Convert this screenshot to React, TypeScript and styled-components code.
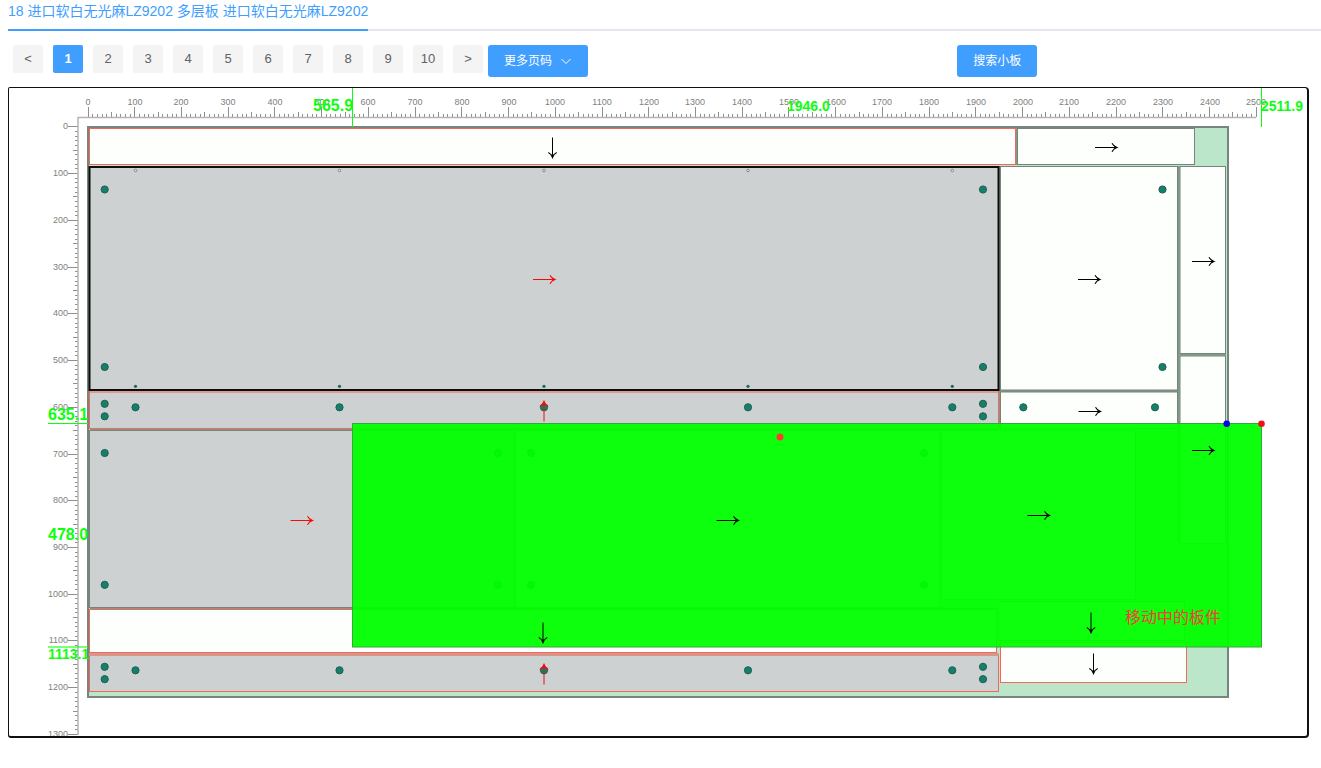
import React from "react";
import styled, { createGlobalStyle, css } from "styled-components";

const GlobalStyle = createGlobalStyle`
  *, *::before, *::after { box-sizing: border-box; }
  body {
    margin: 0;
    background: #fff;
    font-family: "Liberation Sans", "Noto Sans CJK SC", sans-serif;
  }
  button { font-family: inherit; cursor: pointer; }
`;

const Page = styled.main`
  padding-left: 8px;
`;

const Tabs = styled.div`
  display: flex;
  height: 31px;
  box-shadow: inset 0 -2px 0 #e4e7ed;
`;

const Tab = styled.button`
  height: 31px;
  padding: 0 0 7px;
  border: 0;
  border-bottom: 2px solid #409eff;
  background: none;
  color: #409eff;
  font-size: 14px;
  line-height: 22px;
  white-space: nowrap;
`;

const Toolbar = styled.div`
  display: flex;
  align-items: flex-start;
  gap: 4px;
  padding: 14px 0 10px;
`;

const PagerArea = styled.div`
  display: flex;
  flex: 0 0 72%;
  gap: 5px;
  padding-left: 5px;
`;

const Pager = styled.nav`
  display: flex;
  gap: 10px;
`;

const PageButton = styled.button<{ $active?: boolean }>`
  width: 30px;
  height: 28px;
  padding: 0;
  border: 0;
  border-radius: 2px;
  background: #f4f4f5;
  color: #606266;
  font-size: 13px;
  line-height: 28px;
  ${(p) =>
    p.$active &&
    css`
      background: #409eff;
      color: #fff;
      font-weight: 700;
    `}
`;

const PrimaryButton = styled.button`
  display: inline-flex;
  align-items: center;
  gap: 6px;
  height: 32px;
  padding: 0 16px;
  border: 0;
  border-radius: 3px;
  background: #409eff;
  color: #fff;
  font-size: 12px;
  line-height: 12px;
  white-space: nowrap;
`;

const Frame = styled.section`
  margin: 0 12px 30px 0;
  border: solid #111;
  border-width: 1px 2px 2px 1px;
  border-radius: 2px 4px 4px 3px;
`;

const Drawing = styled.svg`
  display: block;
  width: 100%;
  height: auto;
`;

const RulerText = styled.text`
  font-size: 9px;
  fill: #808080;
`;

const Measure = styled.text<{ $long?: boolean }>`
  font-size: ${(p) => (p.$long ? 14 : 16)}px;
  font-weight: 700;
  fill: #0dff0d;
`;

const MovingLabel = styled.text`
  font-size: 16px;
  fill: #f83c38;
`;

const ORIGIN_X = 88;
const ORIGIN_Y = 126.9;
const STEP = 4.673;

const GREY = "#cdd1d1";
const WHITE = "#fcfffc";
const EDGE = "#78837c";
const RED = "#f2665c";

type Panel = { x: number; y: number; r: number; b: number; fill: string; edge: string };

const panels: Panel[] = [
  { x: 89.5, y: 128.5, r: 1015.5, b: 164.5, fill: WHITE, edge: RED },
  { x: 1017.5, y: 128.5, r: 1194.5, b: 164.5, fill: WHITE, edge: EDGE },
  { x: 1000.5, y: 166.5, r: 1177.5, b: 390, fill: WHITE, edge: EDGE },
  { x: 1180, y: 166.5, r: 1225.5, b: 353.5, fill: WHITE, edge: EDGE },
  { x: 1180, y: 356, r: 1225.5, b: 543.5, fill: WHITE, edge: EDGE },
  { x: 89.5, y: 391.5, r: 998.5, b: 428.5, fill: GREY, edge: RED },
  { x: 1000.5, y: 392, r: 1177.5, b: 428.5, fill: WHITE, edge: EDGE },
  { x: 89.5, y: 430.5, r: 513.5, b: 607.5, fill: GREY, edge: EDGE },
  { x: 515.5, y: 430.5, r: 939.5, b: 607.5, fill: WHITE, edge: EDGE },
  { x: 941.5, y: 430.5, r: 1135.5, b: 599.5, fill: WHITE, edge: EDGE },
  { x: 89.5, y: 609.5, r: 996.5, b: 652.5, fill: WHITE, edge: RED },
  { x: 998.5, y: 601.5, r: 1184.5, b: 640.5, fill: WHITE, edge: RED },
  { x: 1000.5, y: 642.5, r: 1186.5, b: 682.5, fill: WHITE, edge: RED },
  { x: 89.5, y: 654.5, r: 998.5, b: 691.5, fill: GREY, edge: RED },
];

const columns = [135.5, 339.5, 544, 748, 952.3];

const holes: [number, number][] = [
  ...[189.5, 367].flatMap((y) => [104.7, 983, 1162.5].map((x) => [x, y] as [number, number])),
  ...[403.8, 416.3, 666.8, 679.2].flatMap((y) => [104.7, 983].map((x) => [x, y] as [number, number])),
  ...[407.3, 670.3].flatMap((y) => columns.map((x) => [x, y] as [number, number])),
  [1023.3, 407.3],
  [1155, 407.3],
  ...[453, 584.8].flatMap((y) => [104.7, 498, 531, 924].map((x) => [x, y] as [number, number])),
];

type ArrowSpec = { x: number; y: number; turn: number; color: string };

const INK = "#000";
const HOT = "#f80808";

const arrows: ArrowSpec[] = [
  { x: 1106, y: 147.5, turn: 0, color: INK },
  { x: 544, y: 279.5, turn: 0, color: HOT },
  { x: 1089, y: 279.5, turn: 0, color: INK },
  { x: 1203, y: 261.5, turn: 0, color: INK },
  { x: 1089.5, y: 411.5, turn: 0, color: INK },
  { x: 1203, y: 450.5, turn: 0, color: INK },
  { x: 301.5, y: 520.5, turn: 0, color: HOT },
  { x: 727.5, y: 520.5, turn: 0, color: INK },
  { x: 1038.5, y: 515.5, turn: 0, color: INK },
  { x: 552.5, y: 147.5, turn: 90, color: INK },
  { x: 543, y: 632.5, turn: 90, color: INK },
  { x: 1091, y: 622.5, turn: 90, color: INK },
  { x: 1093.5, y: 663.5, turn: 90, color: INK },
  { x: 544, y: 411.5, turn: -90, color: HOT },
  { x: 544, y: 674.5, turn: -90, color: HOT },
];

const pages = ["1", "2", "3", "4", "5", "6", "7", "8", "9", "10"];

function Arrow({ x, y, turn, color }: ArrowSpec) {
  const half = turn === 0 ? 11 : 10;
  return (
    <g transform={`translate(${x} ${y}) rotate(${turn})`} fill="none" stroke={color}>
      <path d={`M${-half} 0H${half}`} />
      <path d={`M${half - 5} -4.2Q${half - 3.5} -1.2 ${half} 0Q${half - 3.5} 1.2 ${half - 5} 4.2`} strokeWidth="1.1" />
      <path d={`M${half - 3} -1.5L${half} 0L${half - 3} 1.5Z`} fill={color} stroke="none" />
    </g>
  );
}

function tickLength(i: number) {
  if (i % 10 === 0) return 10;
  return i % 5 === 0 ? 5 : 3;
}

function Rulers() {
  const across = Array.from({ length: 251 }, (_, i) => i);
  const down = Array.from({ length: 131 }, (_, i) => i);
  return (
    <g>
      <g stroke="#8f8f8f" shapeRendering="crispEdges">
        {across.map((i) => {
          const x = Math.floor(ORIGIN_X + i * STEP) + 0.5;
          return <line key={i} x1={x} x2={x} y1={117 - tickLength(i)} y2={117} />;
        })}
        {down.map((i) => {
          const y = Math.floor(ORIGIN_Y + i * STEP) + 0.5;
          return <line key={i} x1={78 - tickLength(i)} x2={78} y1={y} y2={y} />;
        })}
      </g>
      <path d="M78 735V117.5H1256" fill="none" stroke="#b4b4b4" strokeWidth="1.5" />
      {across
        .filter((i) => i % 10 === 0)
        .map((i) => (
          <RulerText key={i} x={Math.round(ORIGIN_X + i * STEP)} y={105} textAnchor="middle">
            {i * 10}
          </RulerText>
        ))}
      {down
        .filter((i) => i % 10 === 0)
        .map((i) => (
          <RulerText key={i} x={68} y={Math.floor(ORIGIN_Y + i * STEP) + 3} textAnchor="end">
            {i * 10}
          </RulerText>
        ))}
    </g>
  );
}

function CuttingPlan() {
  return (
    <Drawing viewBox="9 88 1298 648" role="img" aria-label="排版图">
      <Rulers />
      <rect x="88" y="127" width="1140" height="570" fill="#bce6c9" stroke="#78857c" strokeWidth="2" />
      <path
        d="M1178.75 166V543M1180 354.75H1226M1000 391H1178M90 429.5H998M90 608.5H998M1016.5 128V165M999.5 166V428"
        stroke="#7f9a86"
        strokeWidth="2"
        fill="none"
      />
      {panels.map((p) => (
        <rect
          key={`${p.x}-${p.y}`}
          x={p.x}
          y={p.y}
          width={p.r - p.x}
          height={p.b - p.y}
          fill={p.fill}
          stroke={p.edge}
        />
      ))}
      <path d="M89 654.5H999" stroke="#d9958a" strokeWidth="3" />
      <path d="M90 392H998" stroke="#de9a93" strokeWidth="2" />
      <rect x="89.5" y="167" width="909" height="223" fill={GREY} stroke="#0a0f0d" strokeWidth="2" />
      {holes.map(([x, y]) => (
        <circle key={`${x}-${y}`} cx={x} cy={y} r="3.6" fill="#0f826b" stroke="#2d5a50" />
      ))}
      {columns.map((x) => (
        <g key={x}>
          <circle cx={x} cy="170.5" r="1.3" fill="#dfe3e3" stroke="#6c7774" strokeWidth="0.8" />
          <circle cx={x} cy="386.3" r="1.6" fill="#1f6a5a" />
        </g>
      ))}
      <rect x="352.5" y="423.5" width="909" height="223.5" fill="#0f0" fillOpacity="0.95" stroke="#35a835" />
      {arrows.map((a) => (
        <Arrow key={`${a.x}-${a.y}`} {...a} />
      ))}
      <circle cx="780" cy="437" r="3.5" fill="#ff3b30" />
      <circle cx="1261.5" cy="423.7" r="3.3" fill="#ee1111" />
      <circle cx="1226.7" cy="423.7" r="3.3" fill="#0505dd" />
      <g stroke="#0dff0d">
        <path d="M352.5 88V127M1261.5 88V127M48 423.5H88" />
        <path d="M48 647H88" strokeWidth="2" opacity="0.55" />
      </g>
      <Measure x="313" y="111">565.9</Measure>
      <Measure x="787" y="111" $long>1946.0</Measure>
      <Measure x="1261" y="111" $long>2511.9</Measure>
      <Measure x="48" y="420">635.1</Measure>
      <Measure x="48" y="540">478.0</Measure>
      <Measure x="48" y="659" $long>1113.1</Measure>
      <MovingLabel x="1125" y="623">移动中的板件</MovingLabel>
    </Drawing>
  );
}

export default function App() {
  return (
    <>
      <GlobalStyle />
      <Page>
        <Tabs role="tablist">
          <Tab role="tab" aria-selected="true">
            18 进口软白无光麻LZ9202 多层板 进口软白无光麻LZ9202
          </Tab>
        </Tabs>
        <Toolbar>
          <PagerArea>
            <Pager aria-label="页码">
              <PageButton aria-label="上一页">&lt;</PageButton>
              {pages.map((n) => (
                <PageButton key={n} $active={n === "1"} aria-current={n === "1" ? "page" : undefined}>
                  {n}
                </PageButton>
              ))}
              <PageButton aria-label="下一页">&gt;</PageButton>
            </Pager>
            <PrimaryButton aria-haspopup="menu">
              更多页码
              <svg width="14" height="12" viewBox="0 0 14 12" fill="none" stroke="currentColor" aria-hidden="true">
                <path d="M3.5 4L8 8.5L12.5 4" />
              </svg>
            </PrimaryButton>
          </PagerArea>
          <PrimaryButton>搜索小板</PrimaryButton>
        </Toolbar>
        <Frame>
          <CuttingPlan />
        </Frame>
      </Page>
    </>
  );
}
